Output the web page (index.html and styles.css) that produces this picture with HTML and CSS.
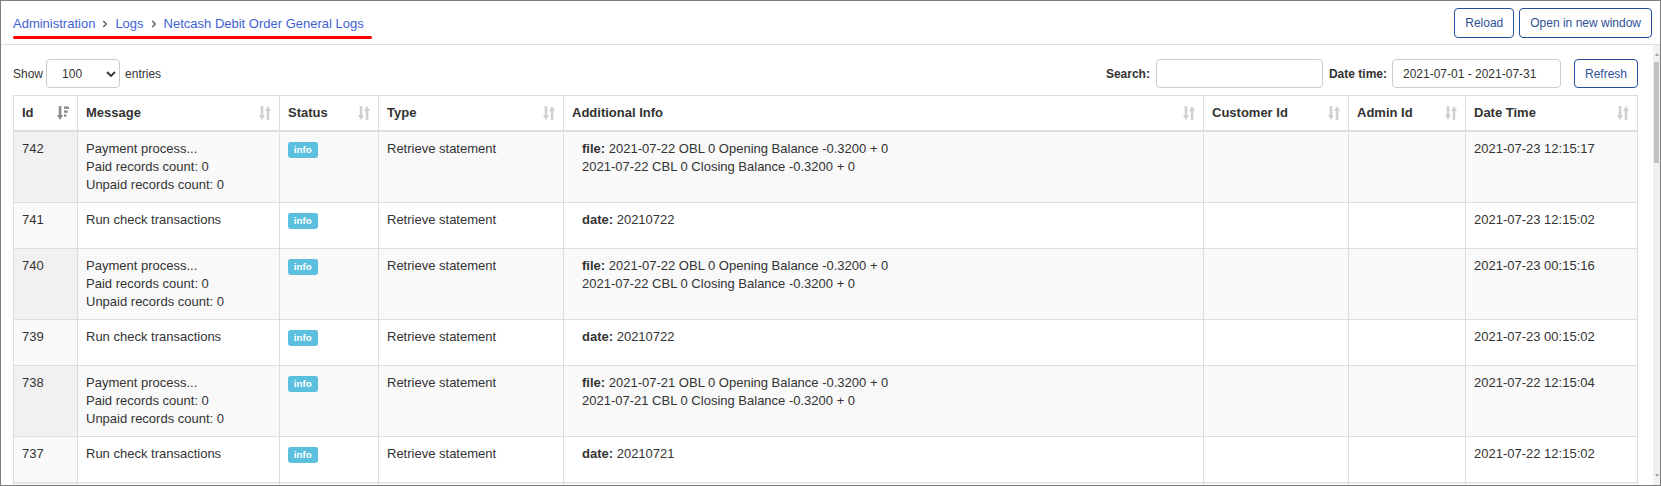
FILE: index.html
```html
<!DOCTYPE html>
<html lang="en">
<head>
<meta charset="utf-8">
<title>Netcash Debit Order General Logs</title>
<link rel="stylesheet" href="styles.css">
</head>
<body>
<div class="frame">
  <header class="topbar">
    <nav class="crumbs">
      <div class="crumb-line">
        <a class="crumb" href="#">Administration</a>
        <svg class="sep" width="6" height="8" viewBox="0 0 6 8"><path d="M1.3 1l3 3-3 3" fill="none" stroke="#555" stroke-width="1.3"/></svg>
        <a class="crumb" href="#">Logs</a>
        <svg class="sep" width="6" height="8" viewBox="0 0 6 8"><path d="M1.3 1l3 3-3 3" fill="none" stroke="#555" stroke-width="1.3"/></svg>
        <a class="crumb" href="#">Netcash Debit Order General Logs</a>
      </div>
      <div class="crumb-mark"></div>
    </nav>
    <div class="actions">
      <button class="btn">Reload</button>
      <button class="btn">Open in new window</button>
    </div>
  </header>

  <div class="body-area">
    <main class="scroller">
      <div class="controls">
        <div class="length">
          <span>Show</span>
          <span class="select"><span>100</span><svg width="10" height="6" viewBox="0 0 10 6"><path d="M1 1l4 4 4-4" fill="none" stroke="#333" stroke-width="1.8"/></svg></span>
          <span>entries</span>
        </div>
        <div class="filters">
          <label class="flabel">Search:</label>
          <input class="input search" type="text" value="">
          <label class="flabel flabel-date">Date time:</label>
          <input class="input date" type="text" value="2021-07-01 - 2021-07-31">
          <button class="btn btn-refresh">Refresh</button>
        </div>
      </div>

      <table class="logs">
        <colgroup>
          <col class="c-id"><col class="c-msg"><col class="c-status"><col class="c-type"><col class="c-info"><col class="c-cust"><col class="c-admin"><col class="c-date">
        </colgroup>
        <thead>
          <tr>
            <th><div class="th-in"><span>Id</span><svg class="sort" width="12" height="14" viewBox="0 0 12 14"><rect x="1.8" y="0" width="2.6" height="9.5" fill="#8a8a8a"/><polygon points="0,9 6.2,9 3.1,14" fill="#8a8a8a"/><rect x="7" y="0.5" width="5" height="2.4" fill="#8a8a8a"/><rect x="7" y="4.4" width="3.8" height="2.4" fill="#8a8a8a"/><rect x="7" y="8.3" width="2.5" height="2.4" fill="#8a8a8a"/></svg></div></th>
            <th><div class="th-in"><span>Message</span><svg class="sort" width="12" height="14" viewBox="0 0 12 14"><rect x="1.7" y="0" width="2.6" height="9.5" fill="#d0d0d0"/><polygon points="0,9 6,9 3,14" fill="#d0d0d0"/><polygon points="6,5 12,5 9,0" fill="#d0d0d0"/><rect x="7.7" y="4.5" width="2.6" height="9.5" fill="#d0d0d0"/></svg></div></th>
            <th><div class="th-in"><span>Status</span><svg class="sort" width="12" height="14" viewBox="0 0 12 14"><rect x="1.7" y="0" width="2.6" height="9.5" fill="#d0d0d0"/><polygon points="0,9 6,9 3,14" fill="#d0d0d0"/><polygon points="6,5 12,5 9,0" fill="#d0d0d0"/><rect x="7.7" y="4.5" width="2.6" height="9.5" fill="#d0d0d0"/></svg></div></th>
            <th><div class="th-in"><span>Type</span><svg class="sort" width="12" height="14" viewBox="0 0 12 14"><rect x="1.7" y="0" width="2.6" height="9.5" fill="#d0d0d0"/><polygon points="0,9 6,9 3,14" fill="#d0d0d0"/><polygon points="6,5 12,5 9,0" fill="#d0d0d0"/><rect x="7.7" y="4.5" width="2.6" height="9.5" fill="#d0d0d0"/></svg></div></th>
            <th><div class="th-in"><span>Additional Info</span><svg class="sort" width="12" height="14" viewBox="0 0 12 14"><rect x="1.7" y="0" width="2.6" height="9.5" fill="#d0d0d0"/><polygon points="0,9 6,9 3,14" fill="#d0d0d0"/><polygon points="6,5 12,5 9,0" fill="#d0d0d0"/><rect x="7.7" y="4.5" width="2.6" height="9.5" fill="#d0d0d0"/></svg></div></th>
            <th><div class="th-in"><span>Customer Id</span><svg class="sort" width="12" height="14" viewBox="0 0 12 14"><rect x="1.7" y="0" width="2.6" height="9.5" fill="#d0d0d0"/><polygon points="0,9 6,9 3,14" fill="#d0d0d0"/><polygon points="6,5 12,5 9,0" fill="#d0d0d0"/><rect x="7.7" y="4.5" width="2.6" height="9.5" fill="#d0d0d0"/></svg></div></th>
            <th><div class="th-in"><span>Admin Id</span><svg class="sort" width="12" height="14" viewBox="0 0 12 14"><rect x="1.7" y="0" width="2.6" height="9.5" fill="#d0d0d0"/><polygon points="0,9 6,9 3,14" fill="#d0d0d0"/><polygon points="6,5 12,5 9,0" fill="#d0d0d0"/><rect x="7.7" y="4.5" width="2.6" height="9.5" fill="#d0d0d0"/></svg></div></th>
            <th><div class="th-in"><span>Date Time</span><svg class="sort" width="12" height="14" viewBox="0 0 12 14"><rect x="1.7" y="0" width="2.6" height="9.5" fill="#d0d0d0"/><polygon points="0,9 6,9 3,14" fill="#d0d0d0"/><polygon points="6,5 12,5 9,0" fill="#d0d0d0"/><rect x="7.7" y="4.5" width="2.6" height="9.5" fill="#d0d0d0"/></svg></div></th>
          </tr>
        </thead>
        <tbody>
          <tr><td class="sorted">742</td><td>Payment process...<br>Paid records count: 0<br>Unpaid records count: 0</td><td><span class="label">info</span></td><td>Retrieve statement</td><td><div class="info"><b>file:</b> 2021-07-22 OBL 0 Opening Balance -0.3200 + 0<br>2021-07-22 CBL 0 Closing Balance -0.3200 + 0</div></td><td></td><td></td><td>2021-07-23 12:15:17</td></tr>
          <tr><td class="sorted">741</td><td>Run check transactions</td><td><span class="label">info</span></td><td>Retrieve statement</td><td><div class="info"><b>date:</b> 20210722</div></td><td></td><td></td><td>2021-07-23 12:15:02</td></tr>
          <tr><td class="sorted">740</td><td>Payment process...<br>Paid records count: 0<br>Unpaid records count: 0</td><td><span class="label">info</span></td><td>Retrieve statement</td><td><div class="info"><b>file:</b> 2021-07-22 OBL 0 Opening Balance -0.3200 + 0<br>2021-07-22 CBL 0 Closing Balance -0.3200 + 0</div></td><td></td><td></td><td>2021-07-23 00:15:16</td></tr>
          <tr><td class="sorted">739</td><td>Run check transactions</td><td><span class="label">info</span></td><td>Retrieve statement</td><td><div class="info"><b>date:</b> 20210722</div></td><td></td><td></td><td>2021-07-23 00:15:02</td></tr>
          <tr><td class="sorted">738</td><td>Payment process...<br>Paid records count: 0<br>Unpaid records count: 0</td><td><span class="label">info</span></td><td>Retrieve statement</td><td><div class="info"><b>file:</b> 2021-07-21 OBL 0 Opening Balance -0.3200 + 0<br>2021-07-21 CBL 0 Closing Balance -0.3200 + 0</div></td><td></td><td></td><td>2021-07-22 12:15:04</td></tr>
          <tr><td class="sorted">737</td><td>Run check transactions</td><td><span class="label">info</span></td><td>Retrieve statement</td><td><div class="info"><b>date:</b> 20210721</div></td><td></td><td></td><td>2021-07-22 12:15:02</td></tr>
          <tr><td class="sorted">736</td><td>Payment process...<br>Paid records count: 0<br>Unpaid records count: 0</td><td><span class="label">info</span></td><td>Retrieve statement</td><td><div class="info"><b>file:</b> 2021-07-21 OBL 0 Opening Balance -0.3200 + 0<br>2021-07-21 CBL 0 Closing Balance -0.3200 + 0</div></td><td></td><td></td><td>2021-07-22 00:15:11</td></tr>
          <tr><td class="sorted">735</td><td>Run check transactions</td><td><span class="label">info</span></td><td>Retrieve statement</td><td><div class="info"><b>date:</b> 20210721</div></td><td></td><td></td><td>2021-07-22 00:15:02</td></tr>
        </tbody>
      </table>
    </main>
    <div class="vscroll">
      <span class="vs-btn"><span class="vs-up"></span></span>
      <span class="vs-thumb"></span>
      <span class="vs-btn vs-btn-end"><span class="vs-down"></span></span>
    </div>
  </div>
</div>
</body>
</html>
```

FILE: styles.css
```css
* { box-sizing: border-box; }

html, body {
  margin: 0;
  padding: 0;
}

body {
  width: 1661px;
  height: 486px;
  overflow: hidden;
  background: #fff;
  color: #333;
  font-family: "Liberation Sans", Arial, sans-serif;
}

.frame {
  width: 1661px;
  height: 486px;
  border: 1px solid #7d7d7d;
  display: flex;
  flex-direction: column;
}

/* ---------- top bar ---------- */
.topbar {
  flex: none;
  height: 44px;
  border-bottom: 1px solid #ddd;
  display: flex;
  justify-content: space-between;
  padding: 0 8px 0 12px;
}

.crumbs {
  padding-top: 14px;
  display: flex;
  flex-direction: column;
  align-items: flex-start;
}

.crumb-line {
  display: flex;
  align-items: center;
  font-size: 13px;
  line-height: 18px;
  white-space: nowrap;
}

.crumb {
  color: #3f5fd4;
  text-decoration: none;
}

.sep {
  margin: 0 7px 0 7px;
  flex: none;
}

.crumb-mark {
  width: calc(100% + 8px);
  height: 3px;
  margin-top: 3px;
  background: #ff0000;
  border-radius: 2px;
}

.actions {
  display: flex;
  align-items: center;
  gap: 5px;
}

.btn {
  height: 30px;
  padding: 0 10px;
  background: #fff;
  color: #2e5197;
  border: 1px solid #264f9b;
  border-radius: 4px;
  font-family: "Liberation Sans", Arial, sans-serif;
  font-size: 12px;
  line-height: 1;
}

/* ---------- body area with scroll ---------- */
.body-area {
  flex: 1;
  min-height: 0;
  display: flex;
}

.scroller {
  flex: 1;
  min-width: 0;
  overflow: hidden;
  padding: 14px 15px 0 12px;
}

.vscroll {
  flex: none;
  width: 7px;
  background: #f1f1f1;
  display: flex;
  flex-direction: column;
}

.vs-btn {
  height: 15px;
  display: flex;
  justify-content: center;
  align-items: center;
  flex: none;
}

.vs-btn-end {
  margin-top: auto;
}

.vs-up {
  width: 0;
  height: 0;
  margin-top: 4px;
  border-left: 2.5px solid transparent;
  border-right: 2.5px solid transparent;
  border-bottom: 3px solid #a3a3a3;
}

.vs-down {
  width: 0;
  height: 0;
  margin-bottom: 4px;
  border-left: 2.5px solid transparent;
  border-right: 2.5px solid transparent;
  border-top: 3px solid #a3a3a3;
}

.vs-thumb {
  flex: none;
  height: 101px;
  margin: 2px 1px 0 1px;
  background: #c1c1c1;
}

/* ---------- controls ---------- */
.controls {
  display: flex;
  justify-content: space-between;
  align-items: center;
  height: 29px;
  margin-bottom: 7px;
  font-size: 12px;
}

.length {
  display: flex;
  align-items: center;
}

.select {
  width: 74px;
  height: 29px;
  margin: 0 5px 0 3px;
  padding: 0 3px 0 15px;
  border: 1px solid #ccc;
  border-radius: 4px;
  display: flex;
  align-items: center;
  justify-content: space-between;
  font-size: 12px;
  color: #333;
}

.filters {
  display: flex;
  align-items: center;
}

.flabel {
  font-weight: bold;
  font-size: 12px;
  margin-right: 6px;
}

.flabel-date {
  margin-right: 5px;
}

.input {
  height: 29px;
  padding: 0 10px;
  border: 1px solid #ccc;
  border-radius: 4px;
  font-family: "Liberation Sans", Arial, sans-serif;
  font-size: 12px;
  color: #333;
  outline: none;
}

.search {
  width: 167px;
  margin-right: 6px;
}

.date {
  width: 169px;
  margin-right: 13px;
}

.btn-refresh {
  height: 29px;
  padding: 0 10px;
}

/* ---------- table ---------- */
.logs {
  width: 1625px;
  table-layout: fixed;
  border-collapse: separate;
  border-spacing: 0;
  border-top: 1px solid #ddd;
  border-left: 1px solid #ddd;
  font-size: 13px;
  line-height: 18px;
  color: #333;
}

.c-id { width: 64px; }
.c-msg { width: 202px; }
.c-status { width: 99px; }
.c-type { width: 185px; }
.c-info { width: 640px; }
.c-cust { width: 145px; }
.c-admin { width: 117px; }
.c-date { width: 172px; }

.logs th,
.logs td {
  padding: 8px;
  text-align: left;
  vertical-align: top;
  border-right: 1px solid #ddd;
  border-bottom: 1px solid #ddd;
}

.logs th {
  font-weight: bold;
  border-bottom-width: 2px;
  background: #fff;
}

.th-in {
  display: flex;
  align-items: center;
  justify-content: space-between;
}

.sort {
  flex: none;
}

.logs tbody tr:nth-child(odd) td {
  background: #f9f9f9;
}

.logs tbody tr:nth-child(odd) td.sorted {
  background: #f1f1f1;
}

.logs tbody tr:nth-child(even) td.sorted {
  background: #fafafa;
}

.info {
  padding-left: 10px;
  margin-bottom: 11px;
}

.label {
  display: inline;
  padding: .2em .6em .3em;
  font-size: 9.75px;
  font-weight: bold;
  line-height: 1;
  color: #fff;
  background: #5bc0de;
  border-radius: .25em;
  vertical-align: baseline;
}
```
